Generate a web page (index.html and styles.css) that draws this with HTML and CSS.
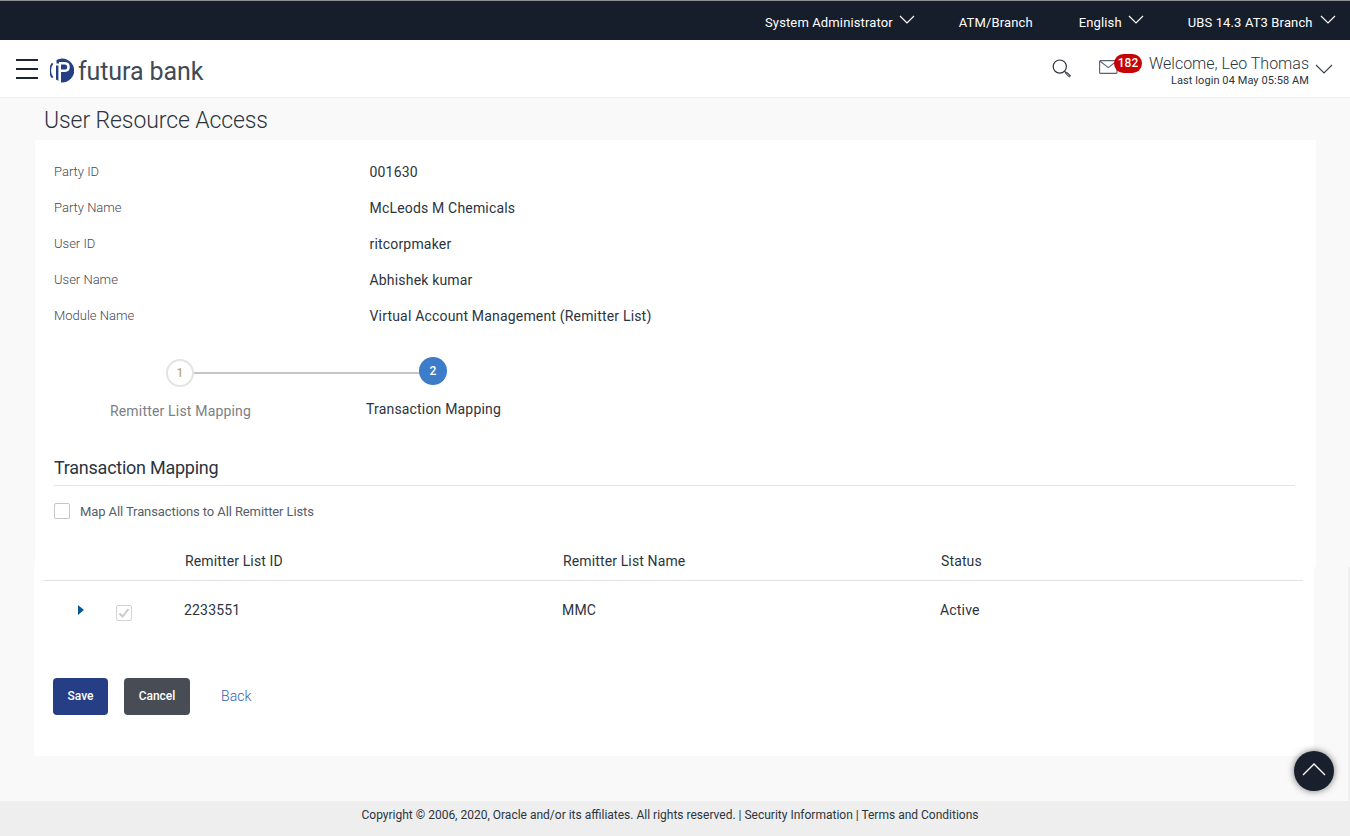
FILE: index.html
```html
<!DOCTYPE html>
<html lang="en">
<head>
<meta charset="utf-8">
<title>User Resource Access</title>
<link rel="stylesheet" href="styles.css">
</head>
<body>
<div class="page">
  <div class="topbar">
    <div class="top-item top-sys"><span>System Administrator</span><svg class="chev" width="16" height="9" viewBox="0 0 16 9"><path d="M1 1l7 7 7-7" fill="none" stroke="#fff" stroke-width="1.2"/></svg></div>
    <div class="top-item top-atm"><span>ATM/Branch</span></div>
    <div class="top-item top-lang"><span>English</span><svg class="chev" width="16" height="9" viewBox="0 0 16 9"><path d="M1 1l7 7 7-7" fill="none" stroke="#fff" stroke-width="1.2"/></svg></div>
    <div class="top-item top-branch"><span>UBS 14.3 AT3 Branch</span><svg class="chev" width="16" height="9" viewBox="0 0 16 9"><path d="M1 1l7 7 7-7" fill="none" stroke="#fff" stroke-width="1.2"/></svg></div>
  </div>
  <header class="header">
    <div class="burger"><i></i><i></i><i></i></div>
    <svg class="logo-mark" width="24" height="25" viewBox="0 0 24 25">
      <path d="M2.600 5.200A12 12 0 0 0 2.600 19.800" fill="none" stroke="#253f86" stroke-width="1.800"/>
      <path d="M6 7.500h2.400v15.300A12 12 0 0 1 6 21.400z" fill="#253f86"/>
      <path d="M6.500 2A12 12 0 1 1 11 24.500V14h4q4.800-.2 4.800-5T15 4H9v1.500H6.500z" fill="#253f86"/>
      <path d="M11 6.500h3.600q2.600 0 2.600 2.500t-2.600 2.600H11z" fill="#253f86"/>
    </svg>
    <span class="logo-text">futura bank</span>
    <div class="header-right">
      <svg class="search" width="20" height="20" viewBox="0 0 20 20"><circle cx="7.800" cy="7.600" r="6.600" fill="none" stroke="#2b3340" stroke-width="1.200"/><path d="M12.600 12.400l1.600 1.300" stroke="#2b3340" stroke-width="1.200"/><path d="M14 13.600l4.200 4" stroke="#2b3340" stroke-width="2.400"/><path d="M14.600 14.400l3 2.800" stroke="#fff" stroke-width=".7"/></svg>
      <div class="mail">
        <svg width="19" height="14" viewBox="0 0 19 14"><rect x=".6" y=".6" width="17.400" height="12.800" rx="1" fill="none" stroke="#59626f" stroke-width="1.100"/><path d="M.8 1l8.500 6.600L17.800 1" fill="none" stroke="#59626f" stroke-width="1.100"/></svg>
        <span class="badge">182</span>
      </div>
      <div class="welcome">
        <div class="welcome-name">Welcome, Leo Thomas</div>
        <div class="welcome-last">Last login 04 May 05:58 AM</div>
      </div>
      <svg class="user-chev" width="18" height="10" viewBox="0 0 18 10"><path d="M1 1l8 8 8-8" fill="none" stroke="#3a4452" stroke-width="1.200"/></svg>
    </div>
  </header>
  <main class="main">
    <h1 class="title">User Resource Access</h1>
    <section class="panel">
      <div class="details">
        <div class="lbl">Party ID</div><div class="val">001630</div>
        <div class="lbl">Party Name</div><div class="val">McLeods M Chemicals</div>
        <div class="lbl">User ID</div><div class="val">ritcorpmaker</div>
        <div class="lbl">User Name</div><div class="val">Abhishek kumar</div>
        <div class="lbl">Module Name</div><div class="val">Virtual Account Management (Remitter List)</div>
      </div>
      <div class="stepper">
        <div class="step step-done"><span class="dot">1</span><span class="step-label">Remitter List Mapping</span></div>
        <div class="step step-active"><span class="dot">2</span><span class="step-label">Transaction Mapping</span></div>
      </div>
      <h2 class="section-title">Transaction Mapping</h2>
      <label class="map-all"><span class="box"></span><span>Map All Transactions to All Remitter Lists</span></label>
      <div class="table">
        <div class="thead">
          <div class="cell-id">Remitter List ID</div>
          <div class="cell-name">Remitter List Name</div>
          <div>Status</div>
        </div>
        <div class="trow">
          <span class="caret"></span>
          <span class="box box-checked"><svg width="14" height="14" viewBox="0 0 14 14"><path d="M2.500 7.500l3 3 6-7.500" fill="none" stroke="#c9c9c9" stroke-width="2"/></svg></span>
          <div class="cell-id">2233551</div>
          <div class="cell-name">MMC</div>
          <div>Active</div>
        </div>
      </div>
      <div class="actions">
        <button class="btn btn-save">Save</button>
        <button class="btn btn-cancel">Cancel</button>
        <a class="back">Back</a>
      </div>
    </section>
  </main>
  <footer class="footer">Copyright © 2006, 2020, Oracle and/or its affiliates. All rights reserved. | Security Information | Terms and Conditions</footer>
  <div class="to-top"><svg width="24" height="13" viewBox="0 0 24 13"><path d="M1 12L12 1l11 11" fill="none" stroke="#fff" stroke-width="1.400"/></svg></div>
</div>
</body>
</html>
```
FILE: styles.css
```css
* { box-sizing: border-box; }
html, body { margin: 0; padding: 0; height: 100%; }
body { font-family: Roboto, "Liberation Sans", sans-serif; color: #2c3440; background: #fff; overflow: hidden; }
.page { min-height: 836px; display: flex; flex-direction: column; }

.topbar { height: 40px; background: #161e2b; border-top: 1px solid #8c8f94; display: flex; align-items: center; color: #fff; font-size: 13px; flex: none; }
.top-item { display: flex; align-items: center; white-space: nowrap; letter-spacing: .13px; }
.top-item span { margin-top: 4px; }
.chev { margin-left: 6px; margin-top: -3px; }
.top-branch .chev { margin-left: 7px; }
.top-sys { margin-left: 765px; }
.top-atm { margin-left: 44px; }
.top-lang { margin-left: 46px; }
.top-branch { margin-left: 44px; }

.header { height: 58px; background: #fff; border-bottom: 1px solid #eee; display: flex; align-items: center; flex: none; padding-left: 16px; }
.burger { width: 22px; display: flex; flex-direction: column; gap: 6.500px; margin-top: 1px; }
.burger i { display: block; height: 2.500px; background: #1a2433; }
.logo-mark { margin-left: 12px; margin-top: 4px; }
.logo-text { font-size: 25px; color: #3f4a56; margin-left: 4px; margin-top: 6px; letter-spacing: -.1px; }
.header-right { margin-left: auto; display: flex; align-items: center; padding-right: 17px; }
.search { margin-top: 0; }
.mail { margin-left: 27px; display: flex; align-items: center; margin-top: -3px; }
.badge { width: 28px; height: 19px; border-radius: 10px; background: #c70404; color: #fff; font-size: 12px; font-weight: 500; text-align: center; line-height: 19px; margin-left: -4px; margin-top: -8px; }
.welcome { margin-left: 2px; margin-top: 12px; text-align: right; width: 165px; white-space: nowrap; }
.welcome-name { font-size: 16px; font-weight: 300; line-height: 18px; color: #2c3440; margin-top: -6px; }
.welcome-last { font-size: 11px; line-height: 14px; color: #2c3440; margin-top: 1px; letter-spacing: .08px; }
.user-chev { margin-left: 6px; margin-top: 1px; }

.main { flex: 1; background: linear-gradient(#f0f0f0, #f0f0f0) 1348px 469px / 2px 100% no-repeat, #f9f9f9; display: flex; flex-direction: column; }
.title { font-size: 23px; font-weight: 300; margin: 0; padding-left: 44px; height: 42px; line-height: 46px; letter-spacing: -.1px; color: #2c3440; }
.panel { margin-left: 34px; width: 1282px; height: 616px; background: linear-gradient(#fff, #fff) 1px 0 / 1281px 427px no-repeat, linear-gradient(#fff, #fff) 0 427px / 1280px 189px no-repeat; padding-top: 14px; display: flex; flex-direction: column; }

.details { display: grid; grid-template-columns: 315.500px 1fr; grid-auto-rows: 36px; padding-left: 20px; align-items: center; }
.lbl { font-size: 13px; font-weight: 300; color: #434a55; padding-bottom: 2px; }
.val { font-size: 14px; color: #2c3440; letter-spacing: .18px; }

.stepper { display: flex; margin-left: 19px; margin-top: 23px; height: 71px; }
.step { width: 253px; display: flex; flex-direction: column; align-items: center; position: relative; font-size: 14px; }
.step-done { padding-top: 2px; }
.dot { width: 28px; height: 28px; border-radius: 50%; display: flex; align-items: center; justify-content: center; font-size: 12px; font-weight: 500; padding-left: 1px; }
.step-label { margin-top: 16px; margin-left: 2px; line-height: 16px; white-space: nowrap; letter-spacing: .18px; }
.step-done .dot { border: 2px solid #e4e4e4; color: #b9ab7c; background: #fff; position: relative; z-index: 1; }
.step-done .step-label { color: #7a7f86; }
.step-done::after { content: ""; position: absolute; left: 50%; top: 15px; width: 240px; height: 2px; background: #c6c6c6; }
.step-active .dot { background: #3d7cc9; color: #fff; position: relative; z-index: 1; }
.step-active .step-label { color: #2c3440; }

.section-title { margin: 25px 0 0 20px; width: 1241px; height: 33px; font-size: 18px; font-weight: 400; line-height: 30px; letter-spacing: -.25px; border-bottom: 1px solid #e6e6e6; color: #2c3440; }
.map-all { display: flex; align-items: center; margin: 17px 0 0 20px; font-size: 13px; letter-spacing: -.1px; color: #565e69; height: 16px; gap: 10px; }
.box { width: 16px; height: 16px; border: 1px solid #c6c6c6; border-radius: 2px; background: #fff; display: block; flex: none; }
.box-checked { display: flex; align-items: center; justify-content: center; border-color: #d2d2d2; margin-left: 32px; margin-top: 6px; }

.table { margin: 24px 0 0 9px; width: 1260px; }
.thead { display: flex; align-items: center; height: 38px; border-bottom: 1px solid #e3e3e3; font-size: 14px; padding-left: 142px; color: #2c3440; padding-bottom: 2px; letter-spacing: .13px; }
.thead .cell-id, .thead .cell-name { width: 378px; flex: none; }
.trow { display: flex; align-items: center; height: 59px; font-size: 14px; padding-left: 35px; padding-bottom: 1px; letter-spacing: .18px; }
.caret { width: 0; height: 0; border-left: 6px solid #075a97; border-top: 5px solid transparent; border-bottom: 5px solid transparent; }
.trow .cell-id { margin-left: 52px; width: 378px; flex: none; }
.trow .cell-name { width: 378px; flex: none; }

.actions { display: flex; align-items: center; margin: 38px 0 0 19px; }
.btn { height: 37px; border: 0; border-radius: 4px; color: #fff; font-family: inherit; font-size: 12px; font-weight: 500; padding: 0 0 2px; }
.btn-save { width: 55px; background: #253e85; }
.btn-cancel { width: 66px; background: #484c55; margin-left: 16px; }
.back { margin-left: 31px; font-size: 14px; font-weight: 300; letter-spacing: .1px; color: #2f5fb3; padding-bottom: 2px; }

.footer { height: 35px; flex: none; margin-top: auto; background: #eee; text-align: center; font-size: 12px; line-height: 28px; color: #2c3440; padding-right: 10px; }
.to-top { position: fixed; left: 1294px; top: 751px; width: 40px; height: 40px; border-radius: 50%; background: #18202e; box-shadow: 0 0 7px rgba(0,0,0,.55); display: flex; align-items: center; justify-content: center; padding-bottom: 3px; }
```
